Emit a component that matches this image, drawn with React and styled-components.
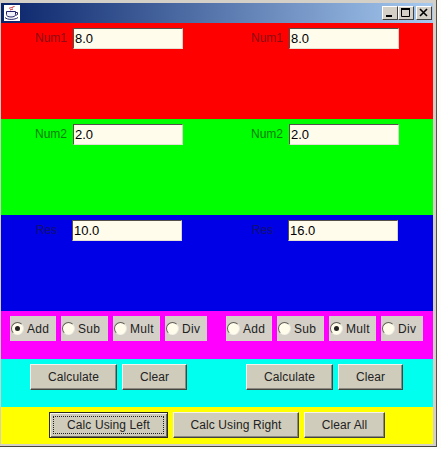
import React from 'react';
import styled, { createGlobalStyle } from 'styled-components';

const Global = createGlobalStyle`
  html, body { margin: 0; padding: 0; background: #fdfdfb; }
  body { font-family: "Liberation Sans", Arial, sans-serif; font-size: 12px; }
`;

const Frame = styled.div`
  width: 437px;
  height: 447px;
  box-sizing: border-box;
  padding: 3px 3px 2px 1px;
  background: #d4d0c8;
  border-right: 1px solid #55534c;
  border-bottom: 1px solid #45433c;
  display: flex;
  flex-direction: column;
`;

const TitleBar = styled.div`
  height: 20px;
  flex: none;
  display: flex;
  align-items: center;
  padding: 0 1px 0 3px;
  box-sizing: border-box;
  background: linear-gradient(90deg, #0a246a 0%, #a6caf0 100%);
`;

const Controls = styled.div`
  margin-left: auto;
  display: flex;
`;

const ControlButton = styled.span`
  width: 16px;
  height: 14px;
  margin-left: ${(p) => p.$gap || 0}px;
  box-sizing: border-box;
  background: #d4d0c8;
  border: 1px solid;
  border-color: #fff #404040 #404040 #fff;
  display: flex;
  align-items: center;
  justify-content: center;
`;

const Row = styled.div`
  display: grid;
  grid-template-columns: 1fr 1fr;
`;

const Band = styled(Row)`
  height: ${(p) => p.$h}px;
  flex: none;
  background: ${(p) => p.$bg};
`;

const Flow = styled.div`
  display: flex;
  justify-content: center;
  align-items: flex-start;
  gap: 5px;
  padding-top: 5px;
`;

// odd total widths would land on a half pixel, nudge them left
const OddFlow = styled(Flow)`
  padding-right: 1px;
`;

const WideBand = styled(Flow)`
  height: 37px;
  flex: none;
  box-sizing: border-box;
  background: #ffff00;
`;

const Label = styled.label`
  width: ${(p) => p.$w}px;
  height: 21px;
  line-height: 20px;
  white-space: nowrap;
  color: ${(p) => p.$color};
`;

const Field = styled.input`
  width: 110px;
  height: 21px;
  box-sizing: border-box;
  margin: 0;
  padding: 0 1px;
  border: 1px solid;
  border-color: #55504a #d8d4c8 #e4e0d4 #55504a;
  background: #fffcec;
  font: 13px "Liberation Sans", Arial, sans-serif;
  color: #000;
  outline: none;
`;

const RadioItem = styled.label`
  width: ${(p) => p.$w}px;
  height: 25px;
  box-sizing: border-box;
  padding-left: 1px;
  display: flex;
  align-items: center;
  gap: 3px;
  background: #d4d0c8;
  color: #222;
  letter-spacing: 0.3px;
`;

const RadioMark = styled.span`
  width: 13px;
  height: 13px;
  flex: none;
  box-sizing: border-box;
  border-radius: 50%;
  background: #fffcec;
  border: 1px solid;
  border-color: #5e5c55 #e8e6dc #f4f2e8 #5e5c55;
  display: flex;
  align-items: center;
  justify-content: center;
  &::after {
    content: '';
    width: 5px;
    height: 5px;
    border-radius: 50%;
    background: ${(p) => (p.$on ? '#222' : 'transparent')};
  }
`;

const Button = styled.button`
  width: ${(p) => p.$w}px;
  height: 26px;
  box-sizing: border-box;
  margin: 0;
  padding: 0;
  background: #d0ccbc;
  border: 1px solid;
  border-color: #f4f2ea #45453e #45453e #f4f2ea;
  box-shadow: inset -1px -1px 0 #8c8a80;
  font: 12px "Liberation Sans", Arial, sans-serif;
  letter-spacing: 0.1px;
  color: #222;
  position: relative;
  ${(p) =>
    p.$focused &&
    `
    border-color: #2c2a20;
    box-shadow: inset 1px 1px 0 #f4f2ea, inset -1px -1px 0 #6c6a60;
    &::after {
      content: '';
      position: absolute;
      inset: 3px;
      border: 1px dotted #222;
    }
  `}
`;

const JavaCup = () => (
  <svg width="16" height="16" viewBox="0 0 16 16">
    <rect width="16" height="16" fill="#fff" />
    <path d="M5 3.500c1-1 2-.5 3-1s1.500-1 2.500-1" stroke="#c8202a" fill="none" />
    <path d="M6 5c1-.5 2-.5 3-1" stroke="#c8202a" fill="none" />
    <path d="M2.500 6.500h9v3c0 1.500-1.500 2.500-4.500 2.500s-4.500-1-4.500-2.500z" fill="#eef0fa" stroke="#20206a" />
    <path d="M11.500 7.500h2v2l-2 1" stroke="#20206a" fill="none" />
    <path d="M1 12.500c2 2.500 10 2.500 13 0" stroke="#20206a" fill="none" />
  </svg>
);

const MinGlyph = () => (
  <svg width="10" height="10" viewBox="0 0 10 10">
    <rect x="1" y="7" width="6" height="2" fill="#000" />
  </svg>
);

const MaxGlyph = () => (
  <svg width="10" height="10" viewBox="0 0 10 10">
    <path d="M0.500 1.500h8v7h-8z" fill="none" stroke="#000" />
    <rect y="0" width="9" height="2" fill="#000" />
  </svg>
);

const CloseGlyph = () => (
  <svg width="10" height="10" viewBox="0 0 10 10">
    <path d="M1 1l7 7M8 1l-7 7" stroke="#000" strokeWidth="1.600" fill="none" />
  </svg>
);

const FieldRow = ({ label, value, color, width }) => (
  <Flow>
    <Label $color={color} $w={width}>{label}</Label>
    <Field readOnly value={value} />
  </Flow>
);

const ops = [
  { name: 'Add', width: 46 },
  { name: 'Sub', width: 47 },
  { name: 'Mult', width: 47 },
  { name: 'Div', width: 42 },
];

const RadioGroup = ({ selected }) => (
  <OddFlow>
    {ops.map((op) => (
      <RadioItem key={op.name} $w={op.width}>
        <RadioMark $on={op.name === selected} />
        {op.name}
      </RadioItem>
    ))}
  </OddFlow>
);

const Actions = () => (
  <OddFlow>
    <Button $w={87}>Calculate</Button>
    <Button $w={65}>Clear</Button>
  </OddFlow>
);

export default function App() {
  return (
    <>
      <Global />
      <Frame>
        <TitleBar>
          <JavaCup />
          <Controls>
            <ControlButton><MinGlyph /></ControlButton>
            <ControlButton><MaxGlyph /></ControlButton>
            <ControlButton $gap={2}><CloseGlyph /></ControlButton>
          </Controls>
        </TitleBar>
        <Band $h={96} $bg="#ff0000">
          <FieldRow label="Num1" value="8.0" color="#8c0c12" width={33} />
          <FieldRow label="Num1" value="8.0" color="#8c0c12" width={33} />
        </Band>
        <Band $h={96} $bg="#00ff00">
          <FieldRow label="Num2" value="2.0" color="#0c800c" width={33} />
          <FieldRow label="Num2" value="2.0" color="#0c800c" width={33} />
        </Band>
        <Band $h={96} $bg="#0000e6">
          <FieldRow label="Res" value="10.0" color="#10106e" width={31} />
          <FieldRow label="Res" value="16.0" color="#10106e" width={31} />
        </Band>
        <Band $h={48} $bg="#ff00ff">
          <RadioGroup selected="Add" />
          <RadioGroup selected="Mult" />
        </Band>
        <Band $h={48} $bg="#00ffee">
          <Actions />
          <Actions />
        </Band>
        <WideBand>
          <Button $w={119} $focused>Calc Using Left</Button>
          <Button $w={126}>Calc Using Right</Button>
          <Button $w={81}>Clear All</Button>
        </WideBand>
      </Frame>
    </>
  );
}
